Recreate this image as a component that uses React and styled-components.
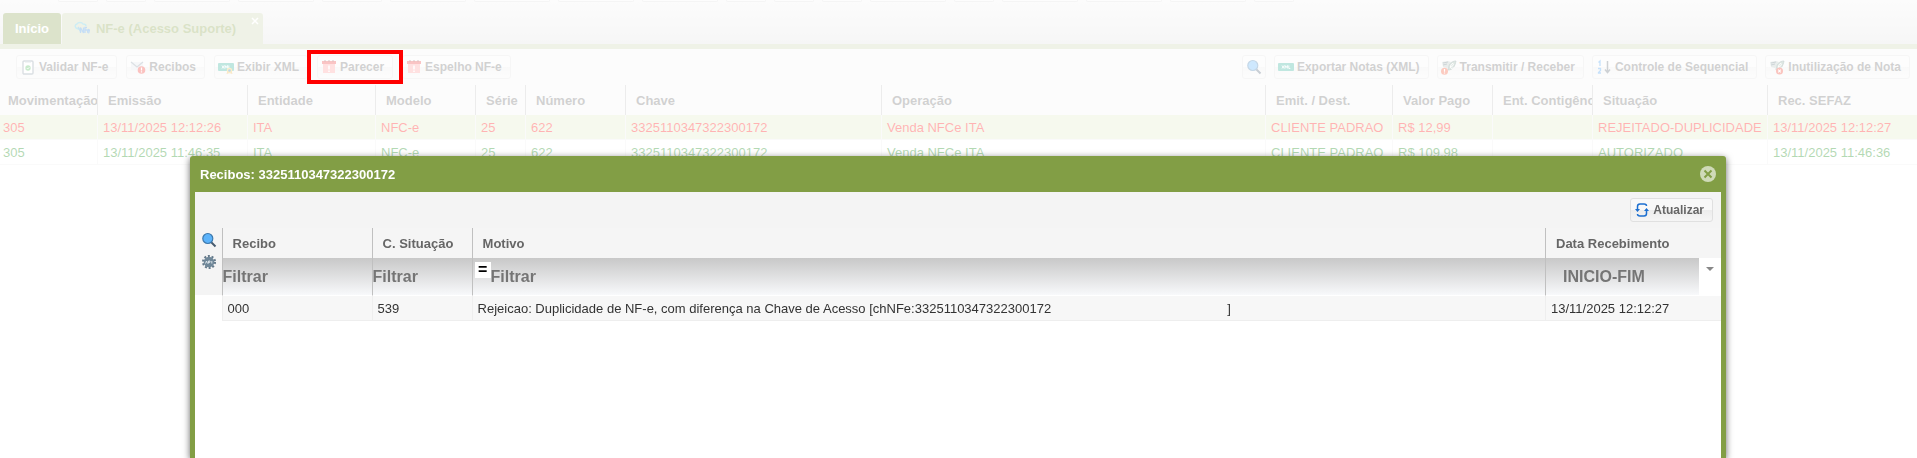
import styled, { createGlobalStyle, css } from 'styled-components';

const GlobalStyle = createGlobalStyle`
    *{
        box-sizing: border-box;
    }
    body{
        margin: 0;
        background-color: #fff;
        color: #333;
        font-family: "Liberation Sans", Arial, sans-serif;
        font-size: 13px;
        overflow: hidden;
    }
    button, input{
        font-family: inherit;
    }
`;

const TopBar = styled.header`
    background: linear-gradient(#f4f4f4, #dfdfdf);
`;

const MenuStrip = styled.div`
    display: flex;
    gap: 8px;
    height: 2px;
    padding-left: 58px;
`;

const MenuEdge = styled.div`
    width: ${props => props.$width}px;
    border: 1px solid #dcdcdc;
    border-top: 0;
    border-radius: 0 0 3px 3px;
    background-color: #f8f8f8;
`;

const Tabs = styled.nav`
    display: flex;
    gap: 1px;
    padding: 11px 3px 0;
    border-bottom: 5px solid #cad4af;
`;

const Tab = styled.button`
    display: flex;
    align-items: center;
    gap: 6px;
    height: 31px;
    padding: 0 12px;
    border: 0;
    border-radius: 3px 3px 0 0;
    background-color: #8aa252;
    color: #fff;
    font-size: 13px;
    font-weight: bold;
    ${props => props.$active && css`
        background-color: #cad4af;
        color: #829e45;
        padding-right: 4px;
    `}
`;

const TabClose = styled.span`
    align-self: flex-start;
    padding: 4px 0 0 9px;
    color: #fff;
    line-height: 0;
`;

const Toolbar = styled.div`
    display: flex;
    justify-content: space-between;
    padding: 6px 7px 6px 16px;
    background-color: #f5f5f5;
`;

const ButtonGroup = styled.div`
    display: flex;
    gap: ${props => props.$gap || 8}px;
`;

const ToolButton = styled.button`
    position: relative;
    display: flex;
    align-items: center;
    gap: 3px;
    height: 24px;
    padding: 0 ${props => props.$iconOnly ? 3 : 8}px 0 3px;
    border: 1px solid #e0e0e0;
    border-radius: 3px;
    background: linear-gradient(#f8f8f8 50%, #ececec 50%, #f5f5f5);
    color: #666;
    font-size: 12px;
    font-weight: bold;
    white-space: nowrap;
    svg{
        flex: none;
    }
`;

const Highlight = styled.span`
    position: absolute;
    z-index: 2;
    inset: -6px -11px;
    border: 4px solid #ff0000;
`;

const Table = styled.table`
    width: 100%;
    table-layout: fixed;
    border-spacing: 0;
`;

const HeadCell = styled.th`
    height: 30px;
    padding: 0 0 0 10px;
    border-left: 1px solid #c0c0c0;
    background-color: #f5f5f5;
    color: #666;
    font-size: 13px;
    text-align: left;
    white-space: nowrap;
    overflow: hidden;
`;

const Cell = styled.td`
    height: 25px;
    padding: 0 0 0 5px;
    border-left: 1px solid #eee;
    border-bottom: 1px solid #eee;
    white-space: nowrap;
    overflow: hidden;
`;

const NotesTable = styled(Table)`
    th:first-child{
        padding-left: 8px;
        border-left: 0;
    }
    td:first-child{
        padding-left: 3px;
        border-left: 0;
    }
`;

const NoteRow = styled.tr`
    color: ${props => props.$rejected ? '#ff0000' : '#008000'};
    background-color: ${props => props.$rejected ? '#e1ebc6' : '#fff'};
`;

const Mask = styled.div`
    position: fixed;
    z-index: 1;
    inset: 0;
    background-color: rgba(255, 255, 255, .7);
`;

const Modal = styled.section`
    position: fixed;
    z-index: 3;
    inset: 156px 191px 0 190px;
    display: flex;
    flex-direction: column;
    padding: 0 5px;
    border-radius: 3px 3px 0 0;
    background-color: #829e45;
    box-shadow: 0 2px 7px rgba(0, 0, 0, .6);
`;

const ModalHeader = styled.div`
    display: flex;
    align-items: center;
    justify-content: space-between;
    height: 36px;
    padding: 0 5px;
`;

const ModalTitle = styled.h2`
    margin: 0;
    color: #fff;
    font-size: 13px;
    font-weight: bold;
`;

const CloseButton = styled.button`
    display: flex;
    padding: 0;
    border: 0;
    background: none;
`;

const ModalBody = styled.div`
    flex: 1;
    background-color: #fff;
`;

const ModalToolbar = styled.div`
    display: flex;
    justify-content: flex-end;
    padding: 6px 8px;
    background-color: #f4f4f4;
`;

const Grid = styled.div`
    display: flex;
    align-items: flex-start;
`;

const SideTools = styled.div`
    display: flex;
    flex-direction: column;
    align-items: center;
    gap: 6px;
    width: 27px;
    height: 67px;
    padding: 4px 0 0 1px;
    background-color: #f4f4f4;
`;

const SideButton = styled.button`
    display: flex;
    padding: 0;
    border: 0;
    background: none;
`;

const FilterCell = styled.td`
    height: 38px;
    padding: 0;
    border-left: 1px solid #c0c0c0;
    border-bottom: 1px solid #fff;
    background: linear-gradient(#c8c8c8, #f8f9fb);
`;

const FilterBox = styled.div`
    display: flex;
    align-items: flex-start;
    height: 37px;
`;

const FilterInput = styled.input`
    flex: 1;
    min-width: 0;
    height: 37px;
    padding: 0 0 0 ${props => props.$indent || 0}px;
    border: 0;
    background: none;
    font-size: 16px;
    font-weight: bold;
    &::placeholder{
        color: #757575;
    }
`;

const Operator = styled.button`
    width: 16px;
    height: 16px;
    margin: 4px 0 0 2px;
    padding: 0;
    border: 0;
    background-color: #fff;
    color: #000;
    font-size: 16px;
    font-weight: bold;
    line-height: 16px;
`;

const DropButton = styled.button`
    display: flex;
    justify-content: center;
    width: 22px;
    height: 37px;
    padding: 9px 0 0;
    border: 0;
    background-color: #fff;
`;

const ReceiptRow = styled.tr`
    background-color: #f7f7f7;
`;

const Blank = styled.span`
    display: inline-block;
    width: 176px;
`;

function ClipboardIcon() {
    return (
        <svg width="16" height="16" viewBox="0 0 16 16">
            <rect x="3" y="2" width="10" height="13" rx="1" fill="#fff" stroke="#8493a0" strokeWidth="1.4" />
            <path d="M5 1h6v2.500H5z" fill="#a5b2bc" />
            <circle cx="8" cy="9" r="2.700" fill="#4fba58" />
            <path d="M6.800 9l1 1 1.600-1.800" fill="none" stroke="#fff" strokeWidth=".8" />
        </svg>
    );
}

function MailAlertIcon() {
    return (
        <svg width="16" height="16" viewBox="0 0 16 16">
            <path d="M1 3h12v8H1z" fill="#dfe5ea" />
            <path d="M1 3l6 5 6-5" fill="none" stroke="#8b98a5" strokeWidth="1.300" />
            <circle cx="11.500" cy="11" r="3.800" fill="#f0342c" />
            <path d="M11.500 8.500v3M11.500 12.300v1.200" stroke="#fff" strokeWidth="1.200" />
        </svg>
    );
}

function XmlIcon({seal}) {
    return (
        <svg width="16" height="16" viewBox="0 0 16 16">
            <rect x="0" y="4" width="16" height="8" rx="1" fill="#2cae98" />
            <path d="M4 6.500l2 3M6 6.500l-2 3M7 9.500v-3l1.200 2 1.200-2v3M10.800 6.500v3h1.500" fill="none" stroke="#fff" strokeWidth=".9" />
            {seal && (
                <>
                    <path d="M9.500 12l-1 3 3-1 3 1-1-3z" fill="#e8a33c" />
                    <circle cx="11.500" cy="11.500" r="2.700" fill="#f4c54a" />
                    <circle cx="11.500" cy="11.500" r="1.300" fill="#2478b8" />
                </>
            )}
        </svg>
    );
}

function CalendarAlertIcon() {
    return (
        <svg width="16" height="16" viewBox="0 0 16 16">
            <rect x="2" y="3" width="12" height="11" fill="#ff9b9b" />
            <path d="M1 2h14v3H1z" fill="#ef3a3a" />
            <path d="M4 1v2M8 1v2M12 1v2" stroke="#8c3030" strokeWidth="1" />
            <path d="M8 6.500v4M8 11.500v1.500" stroke="#fff" strokeWidth="1.500" />
        </svg>
    );
}

function SearchIcon() {
    return (
        <svg width="16" height="16" viewBox="0 0 16 16">
            <path d="M10 10l4.500 4.500" stroke="#465a6e" strokeWidth="2" />
            <circle cx="6.800" cy="6.500" r="5" fill="#5cb3fa" stroke="#3d79ad" strokeWidth="1.200" />
        </svg>
    );
}

function NfeIcon({badge}) {
    return (
        <svg width="16" height="16" viewBox="0 0 16 16">
            <path d="M1 3l6-1 3 1-4 6-4-1z" fill="#b4c4c0" />
            <path d="M2 4l5-1M2 6l4-1" stroke="#5a7078" strokeWidth="1" />
            <path d="M7 11c0-5 3-9 8-9-1 5-3 9-8 9z" fill="#8fae9f" stroke="#62827c" strokeWidth=".8" />
            <path d="M9 8c3 0 4-3 3-3.500S9 7 9.500 8.500s2 1 3 0" fill="none" stroke="#fff" strokeWidth="1" />
            {badge === 'alert' && (
                <>
                    <circle cx="3.500" cy="12.300" r="3.500" fill="#f5502c" />
                    <path d="M3.500 10v2.800M3.500 13.500v1.100" stroke="#fff" strokeWidth="1.200" />
                </>
            )}
            {badge === 'cancel' && (
                <>
                    <circle cx="10.500" cy="12" r="3.500" fill="#ee3a28" />
                    <path d="M9.200 10.700l2.600 2.600M11.800 10.700l-2.600 2.600" stroke="#fff" strokeWidth="1.100" />
                </>
            )}
        </svg>
    );
}

function CloudNfeIcon() {
    return (
        <svg width="16" height="16" viewBox="0 0 16 16">
            <path d="M5 8c-4 0-5-4-2-5 1-2 5-2 6 0 2 0 3 1 3 2" fill="none" stroke="#5bc3da" strokeWidth="1.500" />
            <path d="M4 6l3 5" stroke="#4aa9dc" strokeWidth="1.500" />
            <path d="M6.500 12V6.500l3 5.500V6.500M11 12V6.500h2M11 9h2M13.500 10h2c0-2-2-2-2 0s1 2 2 1.500" fill="none" stroke="#3f8fe0" strokeWidth="1.300" />
        </svg>
    );
}

function SequenceIcon() {
    return (
        <svg width="16" height="16" viewBox="0 0 16 16">
            <path d="M2.500 3.500L4 2v5M2 9.500h2.500v2L2.500 13.500V14H5" fill="none" stroke="#3f9bf0" strokeWidth="1.300" />
            <path d="M11.500 2v11M9 10.500l2.500 3 2.500-3" fill="none" stroke="#5a6670" strokeWidth="1.500" />
        </svg>
    );
}

function GearIcon() {
    return (
        <svg width="16" height="16" viewBox="0 0 16 16">
            <circle cx="8" cy="8" r="6" fill="none" stroke="#64798a" strokeWidth="2" strokeDasharray="2 1.770" />
            <circle cx="8" cy="8" r="5.300" fill="#6f8798" />
            <path d="M4.500 9.500L5.500 7l1 2.500M7.500 9.500V7H9v1.300H7.500M10.800 7v2.500" fill="none" stroke="#e3eaef" strokeWidth=".9" />
        </svg>
    );
}

function RefreshIcon() {
    return (
        <svg width="16" height="16" viewBox="0 0 16 16">
            <path d="M3.500 8V4.500Q3.500 2 6 2h4q2.500 0 2.500 2M12.500 8v3.500q0 2.500-2.500 2.500H6q-2.500 0-2.500-2" fill="none" stroke="#1d6fd0" strokeWidth="1.500" />
            <path d="M1 7h5L3.500 10zM10 9h5l-2.500-3z" fill="#1d6fd0" />
        </svg>
    );
}

function CloseIcon() {
    return (
        <svg width="16" height="16" viewBox="0 0 16 16">
            <circle cx="8" cy="8" r="8" fill="#cfdab8" />
            <path d="M4.500 4.500l7 7M11.500 4.500l-7 7" stroke="#829e45" strokeWidth="2" />
        </svg>
    );
}

const menuEdges = [40, 40, 76, 76, 60, 76, 76, 76, 76, 40, 40, 40, 76, 40, 76, 76, 76, 40];

const leftActions = [
    {label: 'Validar NF-e', icon: <ClipboardIcon />},
    {label: 'Recibos', icon: <MailAlertIcon />},
    {label: 'Exibir XML', icon: <XmlIcon seal />},
    {label: 'Parecer', icon: <CalendarAlertIcon />, highlighted: true},
    {label: 'Espelho NF-e', icon: <CalendarAlertIcon />},
];

const rightActions = [
    {label: 'Exportar Notas (XML)', icon: <XmlIcon />},
    {label: 'Transmitir / Receber', icon: <NfeIcon badge="alert" />},
    {label: 'Controle de Sequencial', icon: <SequenceIcon />},
    {label: 'Inutilização de Nota', icon: <NfeIcon badge="cancel" />},
];

const noteColumns = [
    {title: 'Movimentação', width: 97},
    {title: 'Emissão', width: 150},
    {title: 'Entidade', width: 128},
    {title: 'Modelo', width: 100},
    {title: 'Série', width: 50},
    {title: 'Número', width: 100},
    {title: 'Chave', width: 256},
    {title: 'Operação'},
    {title: 'Emit. / Dest.', width: 127},
    {title: 'Valor Pago', width: 100},
    {title: 'Ent. Contigência', width: 100},
    {title: 'Situação', width: 175},
    {title: 'Rec. SEFAZ', width: 150},
];

const notes = [
    {
        rejected: true,
        cells: ['305', '13/11/2025 12:12:26', 'ITA', 'NFC-e', '25', '622', '3325110347322300172', 'Venda NFCe ITA', 'CLIENTE PADRAO', 'R$ 12,99', '', 'REJEITADO-DUPLICIDADE', '13/11/2025 12:12:27'],
    },
    {
        rejected: false,
        cells: ['305', '13/11/2025 11:46:35', 'ITA', 'NFC-e', '25', '622', '3325110347322300172', 'Venda NFCe ITA', 'CLIENTE PADRAO', 'R$ 109,98', '', 'AUTORIZADO', '13/11/2025 11:46:36'],
    },
];

function Action({label, icon, highlighted}) {
    return (
        <ToolButton type="button">
            {icon}
            {label}
            {highlighted && <Highlight />}
        </ToolButton>
    );
}

function NotesPage() {
    return (
        <main>
            <TopBar>
                <MenuStrip>
                    {menuEdges.map((width, i) => <MenuEdge key={i} $width={width} />)}
                </MenuStrip>
                <Tabs>
                    <Tab type="button">Início</Tab>
                    <Tab type="button" $active>
                        <CloudNfeIcon />
                        NF-e (Acesso Suporte)
                        <TabClose>
                            <svg width="8" height="8" viewBox="0 0 8 8">
                                <path d="M1 1l6 6M7 1L1 7" stroke="currentColor" strokeWidth="1.500" />
                            </svg>
                        </TabClose>
                    </Tab>
                </Tabs>
            </TopBar>
            <Toolbar>
                <ButtonGroup $gap={9}>
                    {leftActions.map(action => <Action key={action.label} {...action} />)}
                </ButtonGroup>
                <ButtonGroup>
                    <ToolButton type="button" $iconOnly aria-label="Pesquisar">
                        <SearchIcon />
                    </ToolButton>
                    {rightActions.map(action => <Action key={action.label} {...action} />)}
                </ButtonGroup>
            </Toolbar>
            <NotesTable>
                <colgroup>
                    {noteColumns.map(col => <col key={col.title} width={col.width} />)}
                </colgroup>
                <thead>
                    <tr>
                        {noteColumns.map(col => <HeadCell key={col.title}>{col.title}</HeadCell>)}
                    </tr>
                </thead>
                <tbody>
                    {notes.map((note, i) => (
                        <NoteRow key={i} $rejected={note.rejected}>
                            {note.cells.map((text, j) => <Cell key={j}>{text}</Cell>)}
                        </NoteRow>
                    ))}
                </tbody>
            </NotesTable>
        </main>
    );
}

function ReceiptsModal() {
    return (
        <Modal role="dialog" aria-labelledby="receipts-title">
            <ModalHeader>
                <ModalTitle id="receipts-title">Recibos: 3325110347322300172</ModalTitle>
                <CloseButton type="button" aria-label="Fechar"><CloseIcon /></CloseButton>
            </ModalHeader>
            <ModalBody>
                <ModalToolbar>
                    <Action label="Atualizar" icon={<RefreshIcon />} />
                </ModalToolbar>
                <Grid>
                    <SideTools>
                        <SideButton type="button" aria-label="Pesquisar"><SearchIcon /></SideButton>
                        <SideButton type="button" aria-label="Configurar"><GearIcon /></SideButton>
                    </SideTools>
                    <Table>
                        <colgroup>
                            <col width="150" />
                            <col width="100" />
                            <col />
                            <col width="176" />
                        </colgroup>
                        <thead>
                            <tr>
                                <HeadCell>Recibo</HeadCell>
                                <HeadCell>C. Situação</HeadCell>
                                <HeadCell>Motivo</HeadCell>
                                <HeadCell>Data Recebimento</HeadCell>
                            </tr>
                            <tr>
                                <FilterCell>
                                    <FilterBox>
                                        <FilterInput placeholder="Filtrar" aria-label="Recibo" />
                                    </FilterBox>
                                </FilterCell>
                                <FilterCell>
                                    <FilterBox>
                                        <FilterInput placeholder="Filtrar" aria-label="C. Situação" />
                                    </FilterBox>
                                </FilterCell>
                                <FilterCell>
                                    <FilterBox>
                                        <Operator type="button">=</Operator>
                                        <FilterInput placeholder="Filtrar" aria-label="Motivo" />
                                    </FilterBox>
                                </FilterCell>
                                <FilterCell>
                                    <FilterBox>
                                        <FilterInput $indent={17} placeholder="INICIO-FIM" aria-label="Data Recebimento" />
                                        <DropButton type="button" aria-label="Escolher período">
                                            <svg width="8" height="4" viewBox="0 0 8 4">
                                                <path d="M0 0h8L4 4z" fill="#888" />
                                            </svg>
                                        </DropButton>
                                    </FilterBox>
                                </FilterCell>
                            </tr>
                        </thead>
                        <tbody>
                            <ReceiptRow>
                                <Cell>000</Cell>
                                <Cell>539</Cell>
                                <Cell>
                                    Rejeicao: Duplicidade de NF-e, com diferença na Chave de Acesso [chNFe:3325110347322300172<Blank />]
                                </Cell>
                                <Cell>13/11/2025 12:12:27</Cell>
                            </ReceiptRow>
                        </tbody>
                    </Table>
                </Grid>
            </ModalBody>
        </Modal>
    );
}

export default function App() {
    return (
        <>
            <GlobalStyle />
            <NotesPage />
            <Mask />
            <ReceiptsModal />
        </>
    );
}
